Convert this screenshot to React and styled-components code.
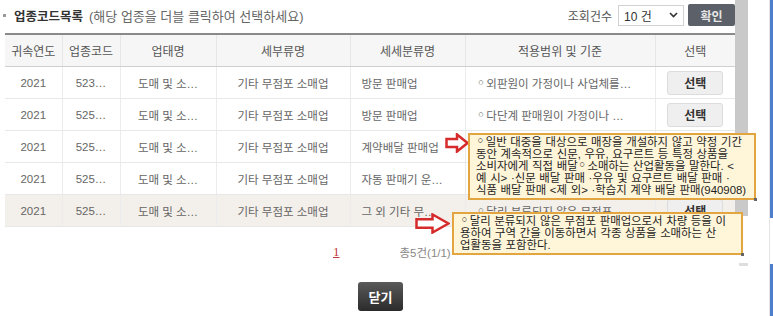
import React from 'react';
import styled, { createGlobalStyle } from 'styled-components';

const GlobalStyle = createGlobalStyle`
  body {
    margin: 0;
    padding: 0;
    background: #ffffff;
    font-family: 'Liberation Sans', 'DejaVu Sans', 'Noto Sans CJK KR', sans-serif;
  }
`;

const Page = styled.div`
  position: relative;
  display: flex;
  width: 773px;
  height: 316px;
  overflow: hidden;
`;

const Main = styled.div`
  width: 730px;
  padding-left: 5px;
  display: flex;
  flex-direction: column;
`;

const TopBar = styled.div`
  height: 30px;
  margin-bottom: 3px;
  display: flex;
  align-items: center;
  justify-content: space-between;
`;

const Title = styled.div`
  display: flex;
  align-items: center;
  font-size: 13px;
  color: #666;
  margin-left: -2px;
`;

const Bullet = styled.span`
  width: 3px;
  height: 3px;
  background: #999;
  margin-right: 8px;
`;

const TitleStrong = styled.b`
  color: #333;
  font-size: 12.5px;
  margin-right: 6px;
`;

const Controls = styled.div`
  display: flex;
  align-items: center;
  font-size: 12px;
  color: #555;
`;

const Select = styled.div`
  width: 66px;
  height: 21px;
  margin-left: 6px;
  border: 1px solid #d2d2d2;
  display: flex;
  align-items: center;
  justify-content: space-between;
  padding: 0 5px;
  box-sizing: border-box;
  font-size: 12px;
  color: #333;
`;

const ConfirmButton = styled.button`
  width: 47px;
  height: 22px;
  margin-left: 4px;
  border: none;
  border-radius: 2px;
  background: #5b6069;
  color: #e6e6e6;
  font-family: inherit;
  font-size: 12px;
  font-weight: bold;
  padding: 0;
`;

const Table = styled.table`
  width: 730px;
  border-collapse: collapse;
  table-layout: fixed;
  border-top: 2px solid #8a8a8a;
`;

const Th = styled.th`
  height: 31px;
  padding: 0;
  background: #f6f6f6;
  border-bottom: 1px solid #cfcfcf;
  border-left: 1px solid #e6e6e6;
  font-size: 12px;
  font-weight: normal;
  color: #555;
  &:first-child { border-left: none; }
`;

const Tr = styled.tr`
  background: ${p => (p.$active ? '#f3efea' : '#ffffff')};
`;

const Td = styled.td`
  height: 31px;
  padding: 0 ${p => (p.$align === 'left' ? '11px' : '4px')};
  border-bottom: 1px solid #e8e8e8;
  border-left: 1px solid #ececec;
  text-align: ${p => p.$align || 'center'};
  font-size: 11.5px;
  color: #666;
  white-space: nowrap;
  overflow: hidden;
  &:first-child { border-left: none; }
`;

const PickButton = styled.button`
  width: 56px;
  height: 24px;
  border: 1px solid #dcdcdc;
  border-radius: 3px;
  background: #efefef;
  color: #333;
  font-family: inherit;
  font-size: 12px;
  font-weight: bold;
  padding: 0;
`;

const Pager = styled.div`
  height: 50px;
  display: flex;
  align-items: center;
  font-size: 12px;
`;

const PageNum = styled.span`
  margin-left: 328px;
  color: #c23a3a;
  text-decoration: underline;
  font-family: 'Liberation Serif', serif;
  font-size: 13px;
`;

const Total = styled.span`
  margin-left: 60px;
  color: #888;
  font-size: 11.5px;
`;

const Footer = styled.div`
  display: flex;
  padding-left: 353px;
  padding-top: 5px;
`;

const CloseButton = styled.button`
  width: 45px;
  height: 29px;
  border: none;
  border-radius: 3px;
  background: linear-gradient(#5a5a5a, #2b2b2b);
  color: #fff;
  font-family: inherit;
  font-size: 13px;
  font-weight: bold;
  padding: 0;
`;

const ScrollTrack = styled.div`
  width: 13px;
  display: flex;
  flex-direction: column;
  align-items: flex-end;
`;

const Thumb = styled.div`
  width: 13px;
  height: 216px;
  background: #c9c9c9;
`;

const ScrollStub = styled.div`
  width: 9px;
  height: 3px;
  margin-top: 47px;
  background: #dedede;
`;

const Gutter = styled.div`
  flex: 1;
  border-right: 1px solid #e4e4e4;
`;

const Edge = styled.div`
  width: 3px;
  display: flex;
  flex-direction: column;
  justify-content: space-between;
`;

const EdgeSeg = styled.div`
  height: ${p => p.$h}px;
  background: #4f7fcc;
`;

const Tip = styled.div`
  position: absolute;
  left: ${p => p.$x}px;
  top: ${p => p.$y}px;
  width: ${p => p.$w}px;
  box-sizing: border-box;
  padding: 1px 5px 2px 6px;
  background: #fff5d9;
  border: 2px solid #e3a540;
  font-size: 11.4px;
  line-height: 12px;
  color: #1e1e1e;
  white-space: nowrap;
  word-spacing: 0.5px;

  &::after {
    content: '';
    position: absolute;
    right: -3px;
    bottom: -3px;
    width: 3px;
    height: 3px;
    background: #666;
  }
`;

const Ring = styled.span`
  font-family: 'DejaVu Sans', sans-serif;
  font-size: 1.3em;
  line-height: 0;
  margin-right: 1px;
`;

const ArrowBox = styled.svg`
  position: absolute;
  left: ${p => p.$x}px;
  top: ${p => p.$y}px;
`;

const Arrow = ({ x, y, w, h }) => (
  <ArrowBox $x={x} $y={y} width={w} height={h} viewBox={`0 0 ${w} ${h}`}>
    <path
      d={`M1.5 ${h * 0.3} H${w * 0.5} V1.5 L${w - 1.5} ${h / 2} L${w * 0.5} ${h - 1.5} V${h * 0.7} H1.5 Z`}
      fill="#ffffff"
      stroke="#d62b2b"
      strokeWidth="2.5"
      strokeLinejoin="miter"
    />
  </ArrowBox>
);

const cols = [57, 58, 96, 134, 115, 190, 80];
const heads = ['귀속연도', '업종코드', '업태명', '세부류명', '세세분류명', '적용범위 및 기준', '선택'];

const rows = [
  { code: '523…', sub: '방문 판매업', desc: '외판원이 가정이나 사업체를…' },
  { code: '525…', sub: '방문 판매업', desc: '다단계 판매원이 가정이나 …' },
  { code: '525…', sub: '계약배달 판매업', desc: '일반 대중을 대상으로 매장을…' },
  { code: '525…', sub: '자동 판매기 운…', desc: '자동판매기를 설치하여 각종…' },
  { code: '525…', sub: '그 외 기타 무…', desc: '달리 분류되지 않은 무점포 …', active: true },
];

const App = () => (
  <>
    <GlobalStyle />
    <Page>
      <Main>
        <TopBar>
          <Title>
            <Bullet />
            <TitleStrong>업종코드목록</TitleStrong>
            (해당 업종을 더블 클릭하여 선택하세요)
          </Title>
          <Controls>
            조회건수
            <Select>
              <span>10 건</span>
              <svg width="9" height="6" viewBox="0 0 9 6">
                <path d="M1 1 L4.5 4.5 L8 1" fill="none" stroke="#333" strokeWidth="1.6" />
              </svg>
            </Select>
            <ConfirmButton>확인</ConfirmButton>
          </Controls>
        </TopBar>
        <Table>
          <colgroup>
            {cols.map((w, i) => <col key={i} style={{ width: w }} />)}
          </colgroup>
          <thead>
            <tr>{heads.map(h => <Th key={h}>{h}</Th>)}</tr>
          </thead>
          <tbody>
            {rows.map((r, i) => (
              <Tr key={i} $active={r.active}>
                <Td>2021</Td>
                <Td>{r.code}</Td>
                <Td>도매 및 소…</Td>
                <Td>기타 무점포 소매업</Td>
                <Td $align="left">{r.sub}</Td>
                <Td $align="left"><Ring>◦</Ring>{r.desc}</Td>
                <Td><PickButton>선택</PickButton></Td>
              </Tr>
            ))}
          </tbody>
        </Table>
        <Pager>
          <PageNum>1</PageNum>
          <Total>총5건(1/1)</Total>
        </Pager>
        <Footer>
          <CloseButton>닫기</CloseButton>
        </Footer>
      </Main>
      <ScrollTrack>
        <Thumb />
        <ScrollStub />
      </ScrollTrack>
      <Gutter />
      <Edge>
        <EdgeSeg $h={218} />
        <EdgeSeg $h={52} />
      </Edge>

      <Arrow x={445} y={133} w={24} h={20} />
      <Tip $x={468} $y={133} $w={288}>
        <Ring>◦</Ring>일반 대중을 대상으로 매장을 개설하지 않고 약정 기간<br />
        동안 계속적으로 신문, 우유, 요구르트 등 특정 상품을<br />
        소비자에게 직접 배달<Ring>◦</Ring>소매하는 산업활동을 말한다. &lt;<br />
        예 시&gt; ·신문 배달 판매 ·우유 및 요구르트 배달 판매 ·<br />
        식품 배달 판매 &lt;제 외&gt; ·학습지 계약 배달 판매(940908)
      </Tip>

      <Arrow x={415} y={213} w={35} h={21} />
      <Tip $x={452} $y={212} $w={291}>
        <Ring>◦</Ring>달리 분류되지 않은 무점포 판매업으로서 차량 등을 이<br />
        용하여 구역 간을 이동하면서 각종 상품을 소매하는 산<br />
        업활동을 포함한다.
      </Tip>
    </Page>
  </>
);

export default App;
